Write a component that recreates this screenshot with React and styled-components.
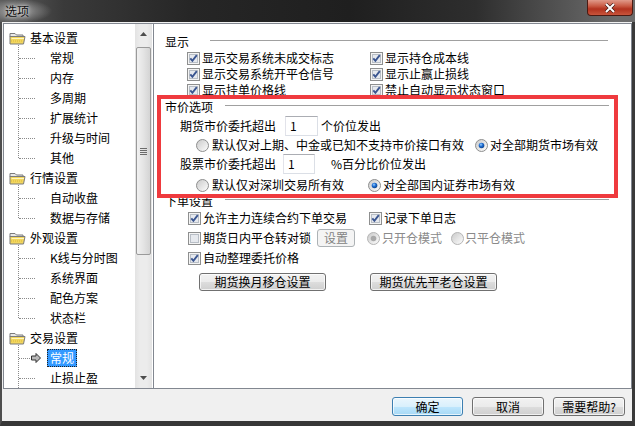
import React from "react";
import styled, { createGlobalStyle, css } from "styled-components";

const GlobalStyle = createGlobalStyle`
  html, body { margin: 0; padding: 0; background: #2b2b2b; }
  body {
    font-family: "Noto Sans CJK SC", "Liberation Sans", sans-serif;
    font-size: 12px;
    line-height: 16px;
    color: #000;
  }
`;

const Window = styled.div`
  width: 635px;
  height: 426px;
  display: flex;
  flex-direction: column;
  overflow: hidden;
`;

const TitleBar = styled.div`
  height: 22px;
  flex: none;
  display: flex;
  justify-content: space-between;
  background:
    radial-gradient(ellipse 34px 12px at 18px 11px, rgba(190,190,190,0.75), rgba(190,190,190,0)),
    linear-gradient(90deg, #5e5e5e 0%, #3a3a3a 10%, #262626 30%, #1f1f1f 55%, #2e2e2e 75%, #6c6c6c 97%);
`;

const Title = styled.span`
  padding-left: 5px;
  line-height: 22px;
  font-size: 12px;
  color: #101010;
  text-shadow: 0 0 6px rgba(255, 255, 255, 0.7), 0 0 3px rgba(255, 255, 255, 0.6);
`;

const CloseButton = styled.div`
  width: 46px;
  height: 16px;
  margin-right: 2px;
  box-sizing: border-box;
  border: 1px solid #4b1a12;
  border-top: none;
  border-radius: 0 0 4px 4px;
  background: linear-gradient(180deg, #e09a8a 0%, #c95a44 40%, #b2321e 60%, #c8553c 100%);
  display: flex;
  align-items: center;
  justify-content: center;
`;

const Body = styled.div`
  flex: 1;
  background: #f0f0f0;
  border-left: 2px solid #4e4e4e;
  border-right: 3px solid #3a3a3a;
  border-bottom: 5px solid #373737;
  padding: 1px 0 0 1px;
  display: flex;
  flex-direction: column;
`;

const Main = styled.div`
  display: flex;
  height: 366px;
`;

const TreePanel = styled.div`
  width: 149px;
  flex: none;
  background: #fff;
  border: 1px solid #828790;
  border-right: none;
  display: flex;
  overflow: hidden;
`;

const TreeList = styled.div`
  flex: 1;
  padding-top: 4px;
  overflow: hidden;
`;

const GroupRow = styled.div`
  height: 20px;
  display: flex;
  align-items: center;
  gap: 4px;
  padding-left: 5px;
  white-space: nowrap;
`;

const LeafRow = styled.div`
  height: 20px;
  position: relative;
  display: flex;
  align-items: center;
  padding-left: 43px;
  white-space: nowrap;
  &::before {
    content: "";
    position: absolute;
    left: 14px;
    top: -3px;
    height: ${(p) => (p.$last ? "13px" : "23px")};
    border-left: 1px dotted #8a8a8a;
  }
  &::after {
    content: "";
    position: absolute;
    left: 15px;
    top: 10px;
    width: ${(p) => (p.$selected ? "11px" : "16px")};
    border-top: 1px dotted #8a8a8a;
  }
`;

const LeafText = styled.span`
  padding: 0 2px;
  line-height: 16px;
  border: 1px solid transparent;
  ${(p) =>
    p.$selected &&
    css`
      background: #3399ff;
      color: #fff;
      border: 1px dotted #222;
    `}
`;

const LeafArrow = styled.span`
  position: absolute;
  left: 27px;
  top: 5px;
  width: 10px;
  height: 10px;
  display: flex;
`;

const ScrollBar = styled.div`
  width: 17px;
  flex: none;
  margin-right: 1px;
  background: linear-gradient(90deg, #e3e3e3, #ececec 30%, #ececec 70%, #e3e3e3);
  display: flex;
  flex-direction: column;
  align-items: center;
`;

const ScrollArrow = styled.div`
  width: 17px;
  height: 20px;
  flex: none;
  display: flex;
  align-items: center;
  justify-content: center;
`;

const ScrollThumb = styled.div`
  width: 15px;
  height: 208px;
  margin-top: 3px;
  box-sizing: border-box;
  border: 1px solid #9a9a9a;
  border-radius: 2px;
  background: linear-gradient(90deg, #f1f1f1, #e4e4e4 50%, #d4d4d4);
  display: flex;
  align-items: center;
  justify-content: center;
`;

const ScrollSpace = styled.div`
  flex: 1;
`;

const SettingsPanel = styled.div`
  flex: 1;
  position: relative;
  background: #fff;
  border: 1px solid #828790;
  padding: 10px 22px 0 11px;
  white-space: nowrap;
`;

const GroupHeader = styled.div`
  display: flex;
  align-items: center;
  height: 16px;
  margin-top: ${(p) => p.$mt || 0}px;
`;

const GroupTitle = styled.span`
  width: ${(p) => p.$w}px;
  flex: none;
`;

const GroupLine = styled.div`
  flex: 1;
  height: 1px;
  background: #a0a0a0;
  margin-top: -4px;
  margin-right: ${(p) => p.$mr || 0}px;
`;

const CheckGrid = styled.div`
  display: grid;
  grid-template-columns: ${(p) => p.$col}px auto;
  grid-auto-rows: ${(p) => p.$rowH || 16}px;
  padding-left: ${(p) => p.$pl}px;
  margin-top: ${(p) => p.$mt || 0}px;
  row-gap: ${(p) => p.$gap || 0}px;
  align-items: center;
`;

const Item = styled.label`
  display: flex;
  align-items: center;
  gap: ${(p) => (p.$gap !== undefined ? p.$gap : 2)}px;
  color: ${(p) => (p.$disabled ? "#8a8a8a" : "#000")};
  margin-right: ${(p) => p.$mr || 0}px;
`;

const Line = styled.div`
  display: flex;
  align-items: center;
  height: ${(p) => p.$h || 16}px;
  padding-left: ${(p) => p.$pl}px;
  margin-top: ${(p) => p.$mt || 0}px;
`;

const NumberBox = styled.div`
  width: ${(p) => p.$w}px;
  height: 20px;
  box-sizing: border-box;
  border: 1px solid #dbdfe6;
  border-top-color: #abadb3;
  border-left-color: #e2e3ea;
  padding-left: 4px;
  line-height: 18px;
  margin: 0 ${(p) => p.$mr}px 0 ${(p) => p.$ml}px;
  background: #fff;
`;

const SmallButton = styled.div`
  width: 38px;
  height: 18px;
  box-sizing: border-box;
  margin: 0 12px 0 6px;
  border: 1px solid #adb2b5;
  border-radius: 3px;
  background: #f4f4f4;
  color: #838383;
  text-align: center;
  line-height: 16px;
`;

const ButtonRow = styled.div`
  display: flex;
  gap: 44px;
  padding-left: 34px;
  margin-top: 7px;
`;

const PushButton = styled.div`
  width: ${(p) => p.$w}px;
  height: ${(p) => p.$h || 18}px;
  box-sizing: border-box;
  border: 1px solid ${(p) => (p.$default ? "#3c7fb1" : "#707070")};
  border-radius: 3px;
  background: ${(p) =>
    p.$default
      ? "linear-gradient(180deg, #eaf6fd 0%, #d9f0fc 50%, #bee6fd 51%, #a7d9f5 100%)"
      : "linear-gradient(180deg, #f2f2f2 0%, #ebebeb 50%, #dddddd 51%, #cfcfcf 100%)"};
  box-shadow: inset 0 0 0 1px rgba(255, 255, 255, 0.7);
  text-align: center;
  line-height: ${(p) => (p.$h || 18) - 2}px;
`;

const Highlight = styled.div`
  position: absolute;
  left: 3px;
  top: 71px;
  width: 461px;
  height: 103px;
  box-sizing: border-box;
  border: 4px solid #ef3a3e;
  pointer-events: none;
`;

const Footer = styled.div`
  flex: 1;
  display: flex;
  justify-content: flex-end;
  align-items: flex-start;
  gap: 9px;
  padding: 8px 7px 0 0;
`;

function FolderIcon() {
  return (
    <svg width="17" height="14" viewBox="0 0 17 14">
      <path d="M1 2.5h5l1.5 1.5H14v2H1z" fill="#e9e9e9" stroke="#7b7b7b" />
      <path d="M1 5.5h15l-1.5 7.5H1z" fill="#f2d65e" stroke="#7b7b7b" />
      <path d="M2.5 7.5h12.5" stroke="#fff6c0" />
      <path d="M2 10h12" stroke="#d9b63a" strokeDasharray="1 1" />
    </svg>
  );
}

function SelArrow() {
  return (
    <svg width="10" height="10" viewBox="0 0 10 10">
      <path d="M0.5 3h4.5V0.5L9.5 5 5 9.5V7H0.5z" fill="#b9b9b9" stroke="#333" />
    </svg>
  );
}

function CheckBox({ checked }) {
  return (
    <svg width="13" height="13" viewBox="0 0 13 13" style={{ flex: "none" }}>
      <rect x="0.5" y="0.5" width="12" height="12" fill="#f4f4f4" stroke="#8e8f8f" />
      <rect x="2.5" y="2.5" width="8" height="8" fill="#e6e9ee" stroke="#b8bec6" />
      {checked && (
        <path d="M3.3 6.3 L5.4 8.8 L9.8 3.2" fill="none" stroke="#3a5590" strokeWidth="1.9" />
      )}
    </svg>
  );
}

function Radio({ checked, disabled }) {
  const dot = disabled ? "#a9a9a9" : "url(#rdot)";
  return (
    <svg width="13" height="13" viewBox="0 0 13 13" style={{ flex: "none" }}>
      <defs>
        <radialGradient id="rdot" cx="0.4" cy="0.35" r="0.7">
          <stop offset="0" stopColor="#9fd4ff" />
          <stop offset="0.45" stopColor="#1f6ed4" />
          <stop offset="1" stopColor="#0a3c7e" />
        </radialGradient>
        <linearGradient id="rbg" x1="0" y1="0" x2="1" y2="1">
          <stop offset="0" stopColor="#c8c8c8" />
          <stop offset="1" stopColor="#ffffff" />
        </linearGradient>
      </defs>
      <circle cx="6.5" cy="6.5" r="6" fill="url(#rbg)" stroke={disabled ? "#b5b5b5" : "#8e8f8f"} />
      {checked && <circle cx="6.5" cy="6.5" r="2.8" fill={dot} />}
    </svg>
  );
}

const tree = [
  { group: "基本设置", items: ["常规", "内存", "多周期", "扩展统计", "升级与时间", "其他"] },
  { group: "行情设置", items: ["自动收盘", "数据与存储"] },
  { group: "外观设置", items: ["K线与分时图", "系统界面", "配色方案", "状态栏"] },
  { group: "交易设置", items: ["常规", "止损止盈"], selected: 0, more: true },
];

export default function App() {
  return (
    <>
      <GlobalStyle />
      <Window>
        <TitleBar>
          <Title>选项</Title>
          <CloseButton>
            <svg width="12" height="10" viewBox="0 0 12 10">
              <path d="M2 1l8 8M10 1L2 9" stroke="#3a1410" strokeWidth="3.2" />
              <path d="M2 1l8 8M10 1L2 9" stroke="#fff" strokeWidth="2" />
            </svg>
          </CloseButton>
        </TitleBar>
        <Body>
          <Main>
            <TreePanel>
              <TreeList>
                {tree.map((g) => (
                  <React.Fragment key={g.group}>
                    <GroupRow>
                      <FolderIcon />
                      <span>{g.group}</span>
                    </GroupRow>
                    {g.items.map((it, i) => {
                      const sel = g.selected === i;
                      return (
                        <LeafRow
                          key={it + i}
                          $last={!g.more && i === g.items.length - 1}
                          $selected={sel}
                        >
                          {sel && (
                            <LeafArrow>
                              <SelArrow />
                            </LeafArrow>
                          )}
                          <LeafText $selected={sel}>{it}</LeafText>
                        </LeafRow>
                      );
                    })}
                  </React.Fragment>
                ))}
              </TreeList>
              <ScrollBar>
                <ScrollArrow>
                  <svg width="7" height="4" viewBox="0 0 7 4">
                    <path d="M0 4L3.5 0L7 4z" fill="#4d4d4d" />
                  </svg>
                </ScrollArrow>
                <ScrollThumb>
                  <svg width="7" height="7" viewBox="0 0 7 7">
                    <path d="M0 0.5h7M0 2.5h7M0 4.5h7M0 6.5h7" stroke="#6b6b6b" />
                  </svg>
                </ScrollThumb>
                <ScrollSpace />
                <ScrollArrow>
                  <svg width="7" height="4" viewBox="0 0 7 4">
                    <path d="M0 0L3.5 4L7 0z" fill="#4d4d4d" />
                  </svg>
                </ScrollArrow>
              </ScrollBar>
            </TreePanel>

            <SettingsPanel>
              <GroupHeader>
                <GroupTitle $w={45}>显示</GroupTitle>
                <GroupLine $mr={1} />
              </GroupHeader>
              <CheckGrid $col={183} $pl={22}>
                <Item><CheckBox checked />显示交易系统未成交标志</Item>
                <Item><CheckBox checked />显示持仓成本线</Item>
                <Item><CheckBox checked />显示交易系统开平仓信号</Item>
                <Item><CheckBox checked />显示止赢止损线</Item>
                <Item><CheckBox checked />显示挂单价格线</Item>
                <Item><CheckBox checked />禁止自动显示状态窗口</Item>
              </CheckGrid>

              <GroupHeader $mt={1}>
                <GroupTitle $w={60}>市价选项</GroupTitle>
                <GroupLine />
              </GroupHeader>
              <Line $h={20} $pl={15} $mt={1}>
                期货市价委托超出
                <NumberBox $w={33} $ml={9} $mr={3}>1</NumberBox>
                个价位发出
              </Line>
              <Line $pl={31} $mt={1}>
                <Item $gap={3} $mr={11}><Radio />默认仅对上期、中金或已知不支持市价接口有效</Item>
                <Item $gap={2}><Radio checked />对全部期货市场有效</Item>
              </Line>
              <Line $h={20} $pl={15} $mt={1}>
                股票市价委托超出
                <NumberBox $w={32} $ml={7} $mr={16}>1</NumberBox>
                %百分比价位发出
              </Line>
              <Line $pl={31} $mt={3}>
                <Item $gap={3} $mr={24}><Radio />默认仅对深圳交易所有效</Item>
                <Item $gap={2}><Radio checked />对全部国内证券市场有效</Item>
              </Line>

              <GroupHeader>
                <GroupTitle $w={60}>下单设置</GroupTitle>
                <GroupLine />
              </GroupHeader>
              <CheckGrid $col={181} $pl={23} $mt={1}>
                <Item><CheckBox checked />允许主力连续合约下单交易</Item>
                <Item><CheckBox checked />记录下单日志</Item>
              </CheckGrid>
              <Line $h={20} $pl={23} $mt={2}>
                <Item><CheckBox />期货日内平仓转对锁</Item>
                <SmallButton>设置</SmallButton>
                <Item $disabled $mr={9}><Radio checked disabled />只开仓模式</Item>
                <Item $disabled $gap={1}><Radio disabled />只平仓模式</Item>
              </Line>
              <Line $pl={23} $mt={2}>
                <Item><CheckBox checked />自动整理委托价格</Item>
              </Line>
              <ButtonRow>
                <PushButton $w={127}>期货换月移仓设置</PushButton>
                <PushButton $w={127}>期货优先平老仓设置</PushButton>
              </ButtonRow>

              <Highlight />
            </SettingsPanel>
          </Main>
          <Footer>
            <PushButton $w={71} $h={19} $default>确定</PushButton>
            <PushButton $w={72} $h={19}>取消</PushButton>
            <PushButton $w={72} $h={19}>需要帮助?</PushButton>
          </Footer>
        </Body>
      </Window>
    </>
  );
}
